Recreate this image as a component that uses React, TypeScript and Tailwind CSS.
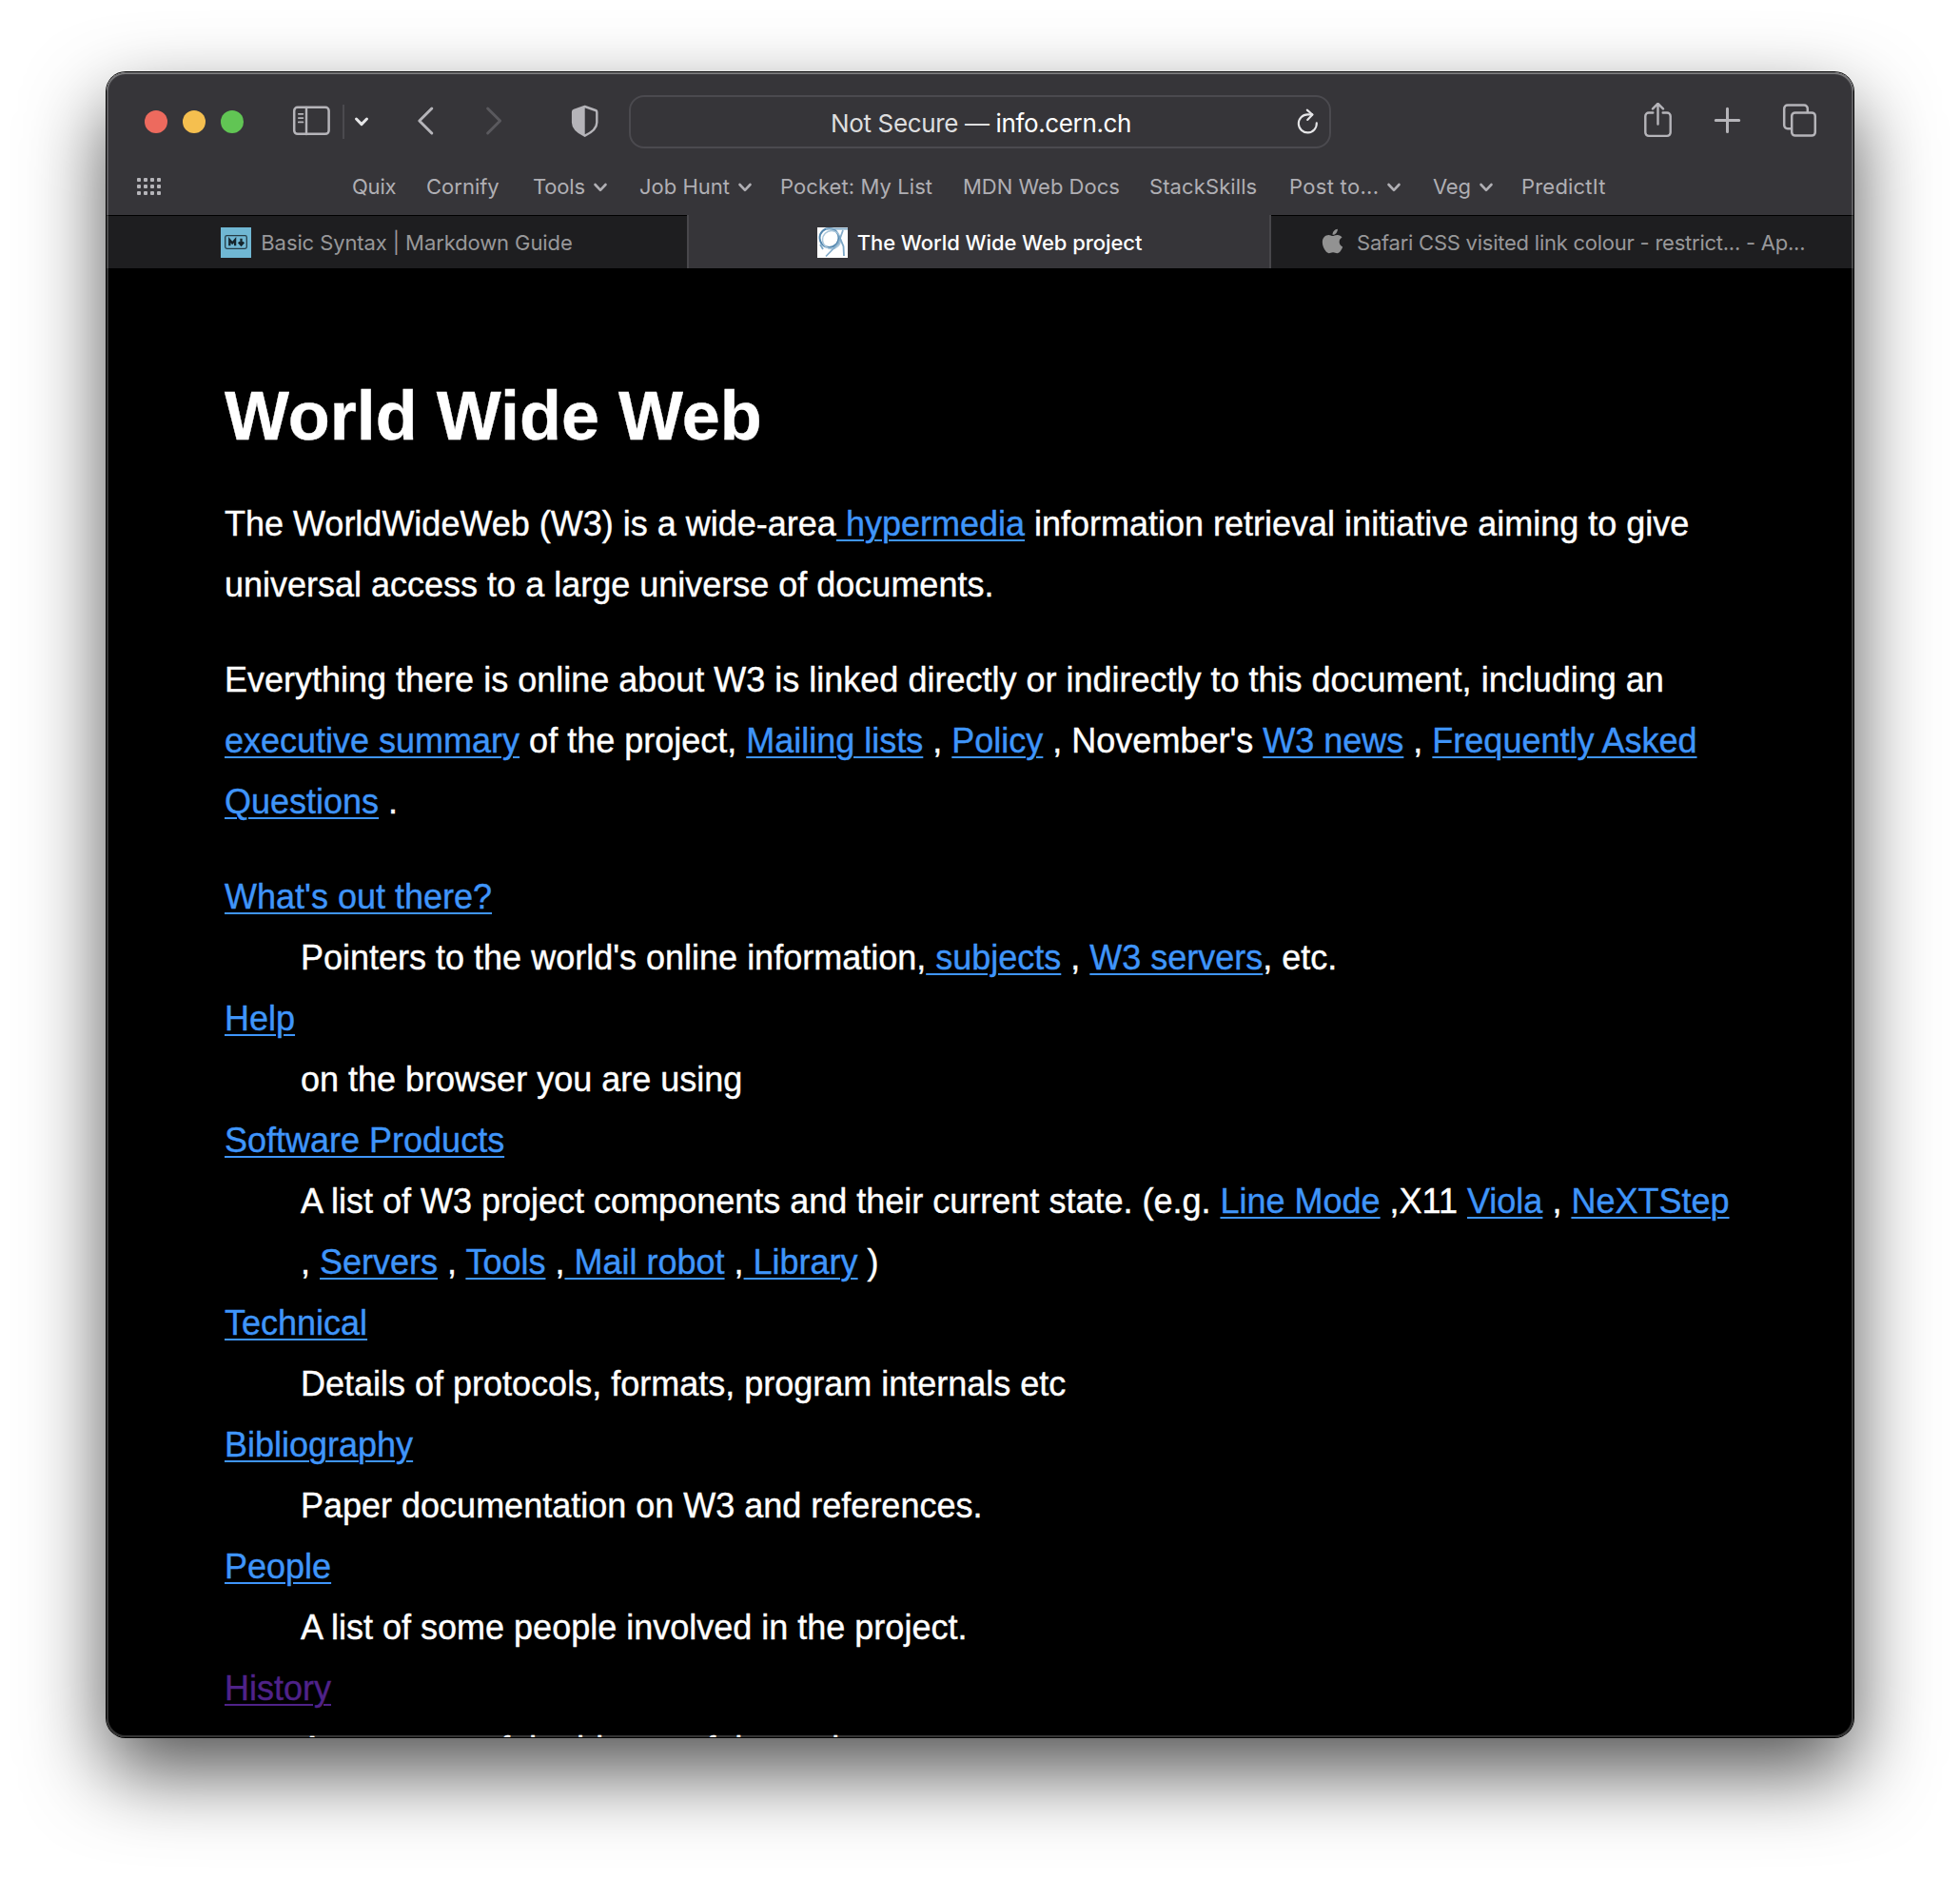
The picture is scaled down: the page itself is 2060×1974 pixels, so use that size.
import type { ReactNode } from 'react';
import { FaApple } from 'react-icons/fa';

type Bookmark = { label: string; menu?: boolean; className: string };

const bookmarks: Bookmark[] = [
  { label: 'Quix', className: 'w-[78px] tracking-[-0.2px]' },
  { label: 'Cornify', className: 'w-[112px]' },
  { label: 'Tools', menu: true, className: 'w-[112px] tracking-[-0.2px]' },
  { label: 'Job Hunt', menu: true, className: 'w-[148px]' },
  { label: 'Pocket: My List', className: 'w-[192px] tracking-[0.08px]' },
  { label: 'MDN Web Docs', className: 'w-[196px]' },
  { label: 'StackSkills', className: 'w-[147px] tracking-[0.1px]' },
  { label: 'Post to...', menu: true, className: 'w-[151px] tracking-[0.3px]' },
  { label: 'Veg', menu: true, className: 'w-[93px] tracking-[-0.2px]' },
  { label: 'PredictIt', className: 'w-[90px] tracking-[0.2px]' },
];

function Chevron() {
  return (
    <svg className="ml-[8px] mt-px h-[10px] w-[16px] shrink-0" viewBox="0 0 16 10" fill="none" stroke="currentColor" strokeWidth="2.6" strokeLinecap="round" strokeLinejoin="round">
      <path d="M2.5 2 8 7.8 13.5 2" />
    </svg>
  );
}

function TrafficLights() {
  return (
    <div className="flex shrink-0 gap-4">
      <span className="size-6 rounded-full bg-[#ed6a5e]" />
      <span className="size-6 rounded-full bg-[#f5bf4f]" />
      <span className="size-6 rounded-full bg-[#61c554]" />
    </div>
  );
}

function SidebarButton() {
  return (
    <svg className="ml-12 h-10 w-[88px] shrink-0" viewBox="304 108 88 40" fill="none" strokeLinecap="round" strokeLinejoin="round">
      <rect x="309.2" y="112.8" width="36.4" height="28" rx="3.6" stroke="#b5b4b9" strokeWidth="2.5" />
      <path d="M322 113v28" stroke="#b5b4b9" strokeWidth="2.4" />
      <path d="M313.8 119.8h4.6M313.8 124.1h4.6M313.8 128.4h4.6" stroke="#b5b4b9" strokeWidth="1.7" />
      <path d="M361 110v36" stroke="#4b4a4f" strokeWidth="2" strokeLinecap="butt" />
      <path d="m374.5 125 5.5 5.6 5.5-5.6" stroke="#e6e6e8" strokeWidth="3" />
    </svg>
  );
}

function HistoryButtons() {
  return (
    <svg className="ml-10 h-10 w-[100px] shrink-0" viewBox="432 108 100 40" fill="none" strokeWidth="3" strokeLinecap="round" strokeLinejoin="round">
      <path d="m453.8 114-13 13 13 13" stroke="#b5b4b9" />
      <path d="m512.6 114 13 13-13 13" stroke="#5a595e" />
    </svg>
  );
}

function Shield() {
  return (
    <svg className="ml-16 h-10 w-[38px] shrink-0" viewBox="596 108 38 40" fill="none" stroke="#b5b4b9" strokeWidth="2.4" strokeLinejoin="round">
      <path d="M614.7 112 603.4 116c-.9.3-1.3.8-1.3 1.7v11.1c0 5.6 4.4 10 12.6 13.9 8.2-3.9 12.6-8.300 12.600-13.900v-11.100c0-.9-.4-1.400-1.300-1.700Z" />
      <path d="M614.7 112 603.4 116c-.9.3-1.3.8-1.3 1.7v11.1c0 5.6 4.4 10 12.6 13.9Z" fill="#b5b4b9" stroke="none" />
    </svg>
  );
}

function Toolbar() {
  return (
    <div className="flex h-[104px] shrink-0 items-center pl-10">
      <TrafficLights />
      <SidebarButton />
      <HistoryButtons />
      <Shield />
      <div className="ml-[27px] flex h-14 w-[738px] shrink-0 items-center rounded-[16px] border-2 border-[#4b4a4f] pr-2 pl-[210px] text-[26px] leading-none tracking-[-0.36px]">
        <span className="mt-[4px] whitespace-pre text-[#dededf]">{'Not Secure — '}</span>
        <span className="mt-[4px] text-white">info.cern.ch</span>
        <svg className="ml-auto h-10 w-[30px] shrink-0" viewBox="1359 108 30 40" fill="none" stroke="#e6e6e8" strokeWidth="2.1" strokeLinecap="round" strokeLinejoin="round">
          <path d="M1379.3 120.4h-5a9.500 9.500 0 1 0 9.500 8.800" />
          <path d="m1373.8 115.6 5.600 4.900-5.200 5.400" />
        </svg>
      </div>
      <svg className="ml-[325px] h-10 w-[38px] shrink-0" viewBox="1724 106 38 40" fill="none" stroke="#b5b4b9" strokeWidth="2.4" strokeLinecap="round" strokeLinejoin="round">
        <path d="M1737.3 116.5h-4.400a3.600 3.600 0 0 0-3.600 3.600v17.200a3.600 3.600 0 0 0 3.600 3.600h19.200a3.600 3.600 0 0 0 3.600-3.600v-17.200a3.600 3.600 0 0 0-3.600-3.600h-4.400" />
        <path d="M1742.5 128.5v-21.300M1737 112.400l5.500-5.600 5.500 5.600" />
      </svg>
      <svg className="ml-9 h-10 w-9 shrink-0" viewBox="1798 108 36 40" fill="none" stroke="#b5b4b9" strokeWidth="3" strokeLinecap="round">
        <path d="M1803.3 126.4h24.400M1815.5 114.2v24.400" />
      </svg>
      <svg className="ml-9 h-10 w-11 shrink-0" viewBox="1870 108 44 40" fill="none" stroke="#b5b4b9" strokeWidth="2.5" strokeLinejoin="round">
        <rect x="1883.2" y="118.4" width="24.6" height="24.2" rx="3.6" />
        <path d="M1883 135.2h-4.200a3.600 3.600 0 0 1-3.600-3.600v-17.400a3.600 3.600 0 0 1 3.600-3.600h17.400a3.600 3.600 0 0 1 3.600 3.600v4" />
      </svg>
    </div>
  );
}

function BookmarksBar() {
  return (
    <div className="mb-[14px] flex h-8 shrink-0 items-center text-[22px] leading-8 text-[#b0afb4]">
      <div className="ml-8 grid w-[25px] shrink-0 grid-cols-[repeat(4,4px)] justify-between gap-y-[3px]">
        {Array.from({ length: 12 }, (_, i) => (
          <span key={i} className="size-1 rounded-[1px] bg-[#b5b4b9]" />
        ))}
      </div>
      <div className="ml-[201px] flex">
        {bookmarks.map((b) => (
          <div key={b.label} className={`flex shrink-0 items-center whitespace-nowrap ${b.className}`}>
            {b.label}
            {b.menu && <Chevron />}
          </div>
        ))}
      </div>
    </div>
  );
}

function MarkdownIcon() {
  return (
    <svg className="size-8 shrink-0" viewBox="0 0 32 32">
      <path fill="#70b7d3" d="M0 0h32v32H0z" />
      <rect x="4.7" y="8.7" width="22.6" height="13.6" rx="1.8" fill="none" stroke="#263d47" strokeWidth="1.3" />
      <path d="M9.300 19.200v-6l2.900 3.400 2.900-3.400v6M21.500 11.800v6M18.800 15.500l2.700 3 2.700-3" fill="none" stroke="#16252c" strokeWidth="2.300" />
    </svg>
  );
}

function CernIcon() {
  return (
    <svg className="size-8 shrink-0" viewBox="0 0 32 32" fill="none" stroke="#5488b0">
      <path fill="#fff" stroke="none" d="M0 0h32v32H0z" />
      <circle cx="12.5" cy="11" r="10" strokeWidth="2" />
      <circle cx="15" cy="13" r="9.5" stroke="#a9c6db" strokeWidth="1.5" />
      <path d="M9 1.500h23M27 3 22 17 9 30.500" stroke="#86adca" strokeWidth="1.800" />
      <path d="M23 9l4.500 11 .5 10M3 18l3 5" stroke="#7ba6c6" strokeWidth="1.800" />
    </svg>
  );
}

function TabBar() {
  return (
    <div className="flex h-14 shrink-0 text-[22px] leading-none whitespace-nowrap text-[#98989a]">
      <div className="flex w-[610px] items-center justify-center gap-[10px] border-t border-black bg-[#1e1e20]">
        <MarkdownIcon />
        <span className="tracking-[-0.1px]">Basic Syntax | Markdown Guide</span>
      </div>
      <div className="flex w-[614px] items-center justify-center gap-[10px] border-x-2 border-[#48474b] pt-px pl-px font-medium tracking-[-0.07px] text-white">
        <CernIcon />
        The World Wide Web project
      </div>
      <div className="flex flex-1 items-center border-t border-black bg-[#1e1e20] pl-[50px]">
        <FaApple className="mb-[3px] size-[29px] shrink-0 text-[#929292]" />
        <span className="ml-[11px] tracking-[-0.24px]">Safari CSS visited link colour - restrict... - Ap...</span>
      </div>
    </div>
  );
}

function Link({ children, visited = false }: { children: ReactNode; visited?: boolean }) {
  return (
    <a className={`underline decoration-[2px] underline-offset-[4px] ${visited ? 'text-[#4f2289]' : 'text-[#3f95fa]'}`}>{children}</a>
  );
}

function Page() {
  return (
    <main className="min-h-0 flex-1 overflow-hidden bg-black pt-[113px] pl-[124px] font-['Liberation_Sans',sans-serif] text-[36px] leading-[64px] whitespace-nowrap text-white [-webkit-text-stroke:0.4px]">
      <h1 className="mb-[40px] text-[72px] leading-[84px] font-bold">World Wide Web</h1>
      <p className="mb-9">
        The WorldWideWeb (W3) is a wide-area<Link> hypermedia</Link> information retrieval initiative aiming to give
        <br />
        universal access to a large universe of documents.
      </p>
      <p className="mb-9">
        Everything there is online about W3 is linked directly or indirectly to this document, including an
        <br />
        <Link>executive summary</Link> of the project, <Link>Mailing lists</Link> , <Link>Policy</Link> , November's <Link>W3 news</Link> , <Link>Frequently Asked</Link>
        <br />
        <Link>Questions</Link> .
      </p>
      <dl className="[&>dd]:pl-20">
        <dt><Link>What's out there?</Link></dt>
        <dd>Pointers to the world's online information,<Link> subjects</Link> , <Link>W3 servers</Link>, etc.</dd>
        <dt><Link>Help</Link></dt>
        <dd>on the browser you are using</dd>
        <dt><Link>Software Products</Link></dt>
        <dd>
          A list of W3 project components and their current state. (e.g. <Link>Line Mode</Link> ,X11 <Link>Viola</Link> , <Link>NeXTStep</Link>
          <br />
          , <Link>Servers</Link> , <Link>Tools</Link> ,<Link> Mail robot</Link> ,<Link> Library</Link> )
        </dd>
        <dt><Link>Technical</Link></dt>
        <dd>Details of protocols, formats, program internals etc</dd>
        <dt><Link>Bibliography</Link></dt>
        <dd>Paper documentation on W3 and references.</dd>
        <dt><Link>People</Link></dt>
        <dd>A list of some people involved in the project.</dd>
        <dt><Link visited>History</Link></dt>
        <dd>A summary of the history of the project.</dd>
      </dl>
    </main>
  );
}

export default function App() {
  return (
    <div className="h-[1974px] w-[2060px] overflow-hidden bg-white pt-[76px] pl-[112px] font-['Inter',sans-serif]">
      <div className="relative h-[1750px] w-[1836px] rounded-[20px] shadow-[0_0_0_1px_#000,0_36px_84px_rgba(0,0,0,0.68)]">
        <div className="flex h-full flex-col overflow-hidden rounded-[20px] bg-[#363539]">
          <Toolbar />
          <BookmarksBar />
          <TabBar />
          <Page />
        </div>
        <div className="pointer-events-none absolute inset-0 rounded-[20px] shadow-[inset_0_0_0_2px_rgba(255,255,255,0.2),inset_0_2px_0_rgba(255,255,255,0.16)]" />
      </div>
    </div>
  );
}
